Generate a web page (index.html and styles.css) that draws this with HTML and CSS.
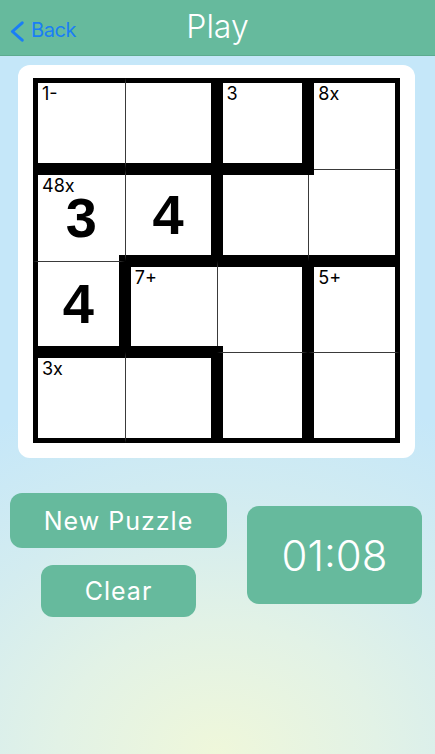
FILE: index.html
```html
<!DOCTYPE html>
<html lang="en">
<head>
<meta charset="utf-8">
<title>Play</title>
<link rel="stylesheet" href="styles.css">
</head>
<body>
<header class="header">
  <a class="back">
    <svg class="chev" width="14" height="21" viewBox="0 0 14 21"><path d="M12.2 1.8 L2.4 10.5 L12.2 19.2" fill="none" stroke="#1a7ef6" stroke-width="3" stroke-linecap="round" stroke-linejoin="round"/></svg>
    <span>Back</span>
  </a>
  <h1 class="title">Play</h1>
  <span class="spacer"></span>
</header>

<main class="main">
  <section class="card">
    <div class="board">
      <div class="cell tO bK lO"><span class="cage">1-</span></div>
      <div class="cell tO rK bK lt"></div>
      <div class="cell tO rK bK lK"><span class="cage">3</span></div>
      <div class="cell tO rO lK"><span class="cage">8x</span></div>

      <div class="cell tK lO fill-br"><span class="cage">48x</span><span class="val">3</span></div>
      <div class="cell tK rK bK lt"><span class="val">4</span></div>
      <div class="cell tK bK lK"></div>
      <div class="cell tt rO bK lt fill-tl"></div>

      <div class="cell tt rK bK lO"><span class="val">4</span></div>
      <div class="cell tK bK lK"><span class="cage">7+</span></div>
      <div class="cell tK rK lt fill-bl"></div>
      <div class="cell tK rO lK"><span class="cage">5+</span></div>

      <div class="cell tK bO lO"><span class="cage">3x</span></div>
      <div class="cell tK rK bO lt"></div>
      <div class="cell tt rK bO lK"></div>
      <div class="cell tt rO bO lK"></div>
    </div>
  </section>

  <section class="controls">
    <div class="left-col">
      <button class="btn btn-new">New Puzzle</button>
      <button class="btn btn-clear">Clear</button>
    </div>
    <div class="timer">01:08</div>
  </section>
</main>
</body>
</html>
```

FILE: styles.css
```css
html, body {
  margin: 0;
  padding: 0;
  height: 100%;
}

body {
  font-family: "Inter", "Liberation Sans", sans-serif;
  background:
    radial-gradient(ellipse 105% 50% at 50% 100%, #eff7da 0%, #e2f2e6 35%, #d3ecf0 65%, rgba(197, 231, 249, 0) 100%),
    #c5e7f9;
  min-height: 754px;
}

.header {
  height: 55px;
  background: #66ba9d;
  border-bottom: 1px solid #5cab8f;
  display: grid;
  grid-template-columns: 1fr auto 1fr;
  align-items: center;
}

.back {
  display: flex;
  align-items: center;
  gap: 7px;
  padding-left: 10px;
  margin-top: 5px;
  color: #1a7ef6;
  font-size: 20px;
  letter-spacing: -0.4px;
}

.chev {
  display: block;
  margin-top: 3px;
}

.title {
  margin: 0 0 2px 0;
  font-size: 32px;
  font-weight: 300;
  color: #ffffff;
}

.main {
  display: flex;
  flex-direction: column;
}

.card {
  margin: 9px 0 0 18px;
  width: 397px;
  box-sizing: border-box;
  padding: 13px 15px 15px 15px;
  background: #ffffff;
  border-radius: 12px;
}

.board {
  width: 367px;
  height: 365px;
  display: grid;
  grid-template-columns: repeat(4, 1fr);
  grid-template-rows: repeat(4, 1fr);
}

.cell {
  position: relative;
  box-sizing: border-box;
  background: #ffffff;
  border-style: solid;
  border-color: #000000;
  border-width: 0;
  display: flex;
  align-items: center;
  justify-content: center;
}

/* thin lines */
.tt { border-top: 1px solid #3a3a3a; }
.lt { border-left: 1px solid #3a3a3a; }

/* thick cage lines */
.tK { border-top: 6px solid #000; }
.rK { border-right: 6px solid #000; }
.bK { border-bottom: 6px solid #000; }
.lK { border-left: 6px solid #000; }

/* outer frame */
.tO { border-top: 5px solid #000; }
.rO { border-right: 5px solid #000; }
.bO { border-bottom: 5px solid #000; }
.lO { border-left: 5px solid #000; }

.fill-br::after,
.fill-tl::after,
.fill-bl::after {
  content: "";
  position: absolute;
  width: 6px;
  height: 6px;
  background: #000;
}
.fill-br::after { right: 0; bottom: 0; }
.fill-tl::after { top: -1px; left: -1px; }
.fill-bl::after { bottom: 0; left: -1px; }

.cage {
  position: absolute;
  top: 4px;
  left: 4px;
  font-family: "Inter", "Liberation Sans", sans-serif;
  font-size: 18px;
  line-height: 14px;
  color: #000;
}

.val {
  font-family: "Liberation Sans", Arial, sans-serif;
  font-weight: 700;
  font-size: 56px;
  line-height: 42px;
  color: #000;
}

.controls {
  margin-top: 35px;
  display: flex;
  align-items: center;
  padding-left: 10px;
  gap: 20px;
}

.left-col {
  width: 217px;
  display: flex;
  flex-direction: column;
  align-items: center;
  gap: 17px;
}

.btn {
  border: 0;
  padding: 0;
  margin: 0;
  background: #66ba9d;
  color: #ffffff;
  font-family: "Inter", "Liberation Sans", sans-serif;
  font-size: 25px;
  font-weight: 400;
  letter-spacing: 1px;
  border-radius: 12px;
}

.btn-new {
  width: 217px;
  height: 55px;
}

.btn-clear {
  width: 155px;
  height: 52px;
}

.timer {
  width: 175px;
  height: 98px;
  border-radius: 12px;
  background: #66ba9d;
  color: #ffffff;
  font-size: 42px;
  font-weight: 300;
  display: flex;
  align-items: center;
  justify-content: center;
}
```
